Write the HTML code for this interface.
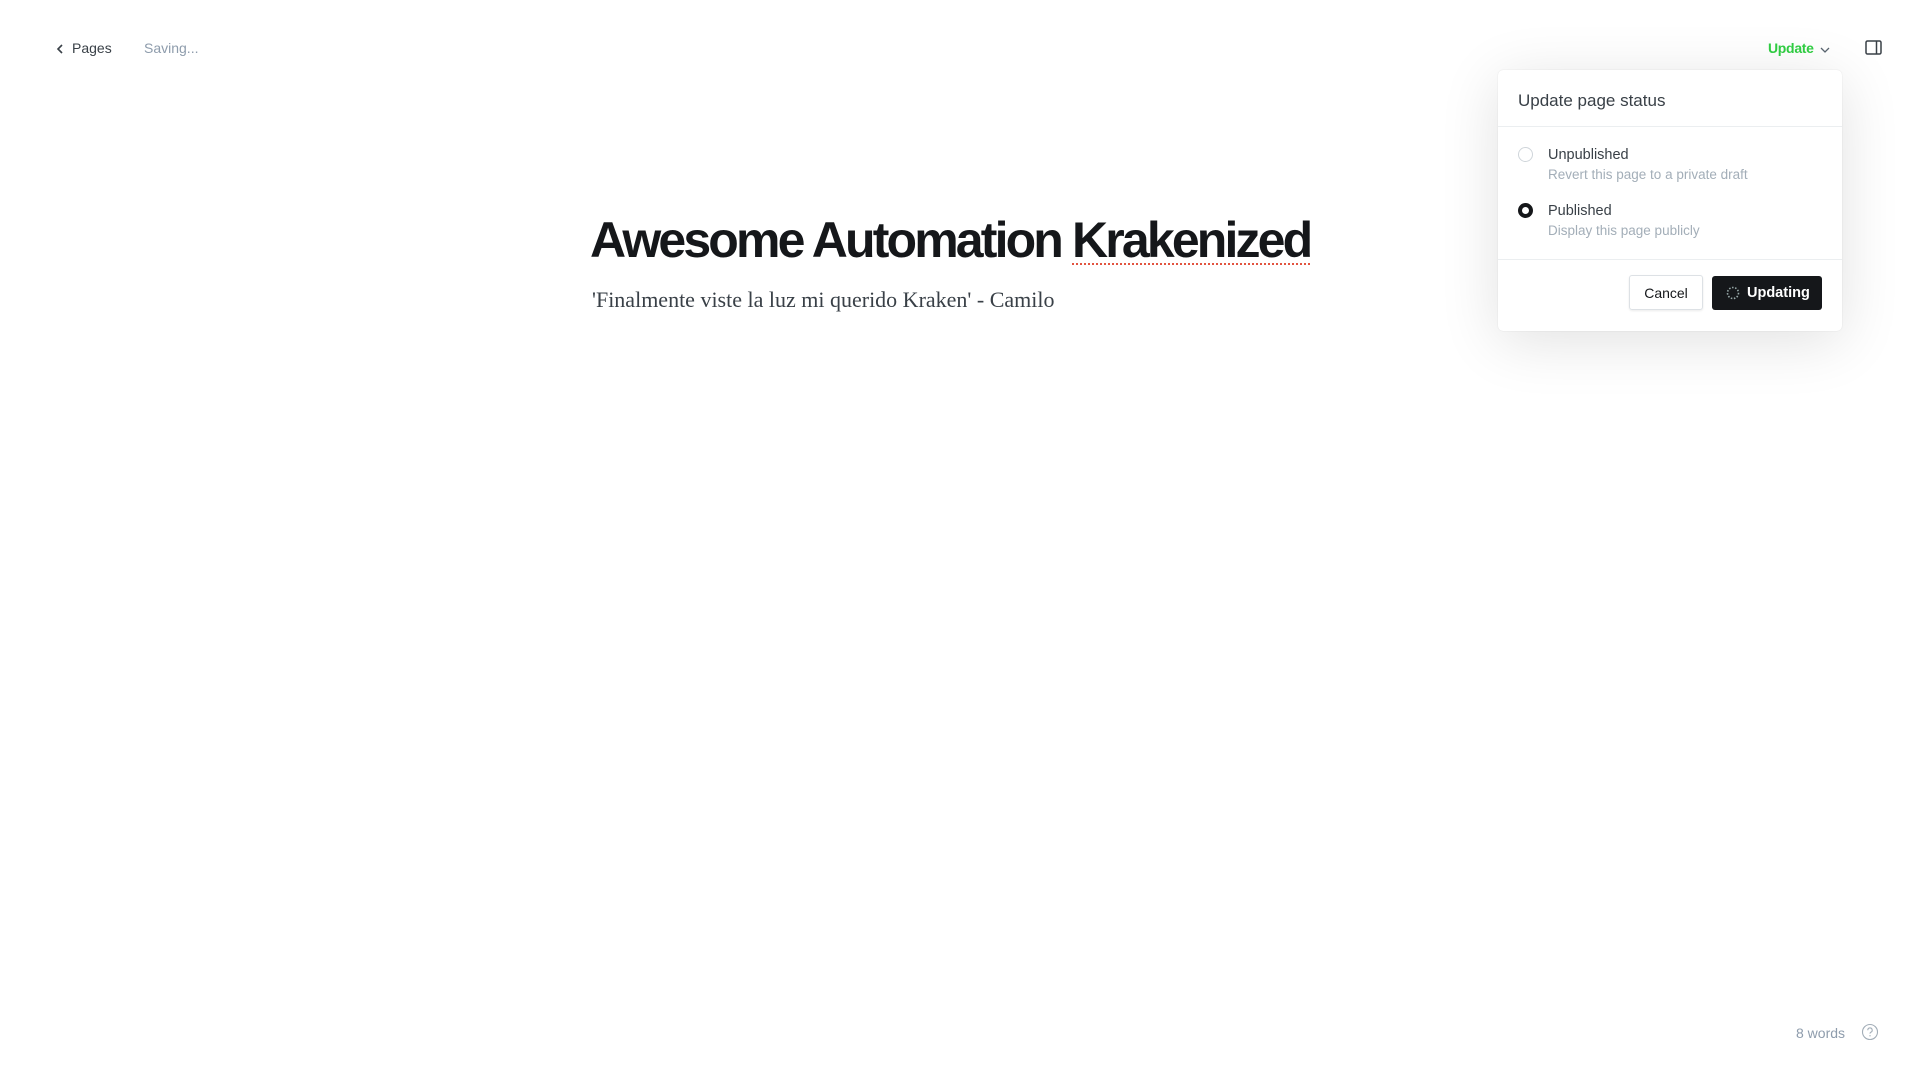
<!DOCTYPE html>
<html><head><meta charset="utf-8"><style>
*{box-sizing:border-box;margin:0;padding:0}
body{width:1920px;height:1080px;background:#fff;font-family:"Liberation Sans",sans-serif;position:relative;overflow:hidden;color:#15171a}
.a{position:absolute;white-space:nowrap}
</style></head><body>
<svg class="a" style="left:55px;top:43px" width="10" height="12" viewBox="0 0 10 12"><path d="M7 2 L3 6 L7 10" fill="none" stroke="#394047" stroke-width="1.6"/></svg>
<div class="a" style="left:72px;top:40px;font-size:14px;color:#394047;font-weight:500">Pages</div>
<div class="a" style="left:144px;top:40px;font-size:14px;color:#8e9cac">Saving...</div>
<div class="a" style="left:1768px;top:40px;font-size:14px;color:#30cf43;font-weight:bold;letter-spacing:-0.3px">Update</div>
<svg class="a" style="left:1820px;top:46px" width="10" height="8" viewBox="0 0 10 8"><path d="M1 2 L5 6 L9 2" fill="none" stroke="#5a6570" stroke-width="1.3"/></svg>
<svg class="a" style="left:1865px;top:40px" width="18" height="16" viewBox="0 0 18 16"><rect x="1" y="1" width="15" height="13" rx="1.5" fill="none" stroke="#394047" stroke-width="1.5"/><line x1="11.5" y1="1" x2="11.5" y2="14" stroke="#394047" stroke-width="1.5"/></svg>

<div class="a" style="left:590px;top:211px;font-size:50px;font-weight:bold;letter-spacing:-2.85px;color:#15171a">Awesome Automation <span style="text-decoration:underline dotted #e25440;text-underline-offset:6px;text-decoration-thickness:2px">Krakenized</span></div>
<div class="a" style="left:592px;top:287px;font-family:'Liberation Serif',serif;font-size:22px;color:#394047">'Finalmente viste la luz mi querido Kraken' - Camilo</div>

<div class="a" style="left:1498px;top:70px;width:344px;height:261px;background:#fff;border-radius:5px;box-shadow:0 0 1px rgba(0,0,0,.15),0 10px 60px rgba(0,0,0,.12)">
 <div class="a" style="left:20px;top:21px;font-size:17px;color:#394047">Update page status</div>
 <div class="a" style="left:0;top:56px;width:344px;height:1px;background:#ebeef0"></div>
 <div class="a" style="left:20px;top:77px;width:15px;height:15px;border-radius:50%;border:1px solid #cfd5da"></div>
 <div class="a" style="left:50px;top:77px;font-size:14.5px;color:#394047;font-weight:500">Unpublished</div>
 <div class="a" style="left:50px;top:97px;font-size:13.5px;color:#a3aeb8">Revert this page to a private draft</div>
 <div class="a" style="left:20px;top:133px;width:15px;height:15px;border-radius:50%;border:4px solid #15171a"></div>
 <div class="a" style="left:50px;top:133px;font-size:14.5px;color:#394047;font-weight:500">Published</div>
 <div class="a" style="left:50px;top:153px;font-size:13.5px;color:#a3aeb8">Display this page publicly</div>
 <div class="a" style="left:0;top:189px;width:344px;height:1px;background:#ebeef0"></div>
 <div class="a" style="left:131px;top:205px;width:74px;height:35px;border:1px solid #dde1e5;border-radius:3px;box-shadow:0 1px 2px rgba(0,0,0,.08);font-size:14px;color:#15171a;font-weight:500;text-align:center;line-height:35px">Cancel</div>
 <div class="a" style="left:214px;top:206px;width:110px;height:34px;background:#15171a;border-radius:3px;color:#fff;font-size:14.5px;font-weight:bold;line-height:35px;padding-left:35px">Updating</div>
 <svg class="a" style="left:228px;top:216px" width="14" height="14" viewBox="0 0 14 14"><circle cx="7" cy="7" r="5.5" fill="none" stroke="#9aa" stroke-width="1.6" stroke-dasharray="1.5 1.6"/></svg>
</div>

<div class="a" style="left:1796px;top:1025px;font-size:14px;color:#8e9cac">8 words</div>
<svg class="a" style="left:1861px;top:1023px" width="18" height="18" viewBox="0 0 18 18"><circle cx="9" cy="9" r="7.5" fill="none" stroke="#a3aeb8" stroke-width="1.1"/><path d="M6.8 7.2 a2.2 2.2 0 1 1 3 2 c-.6.3-.8.7-.8 1.4" fill="none" stroke="#a3aeb8" stroke-width="1.1"/><circle cx="9" cy="12.8" r=".7" fill="#a3aeb8"/></svg>
</body></html>
